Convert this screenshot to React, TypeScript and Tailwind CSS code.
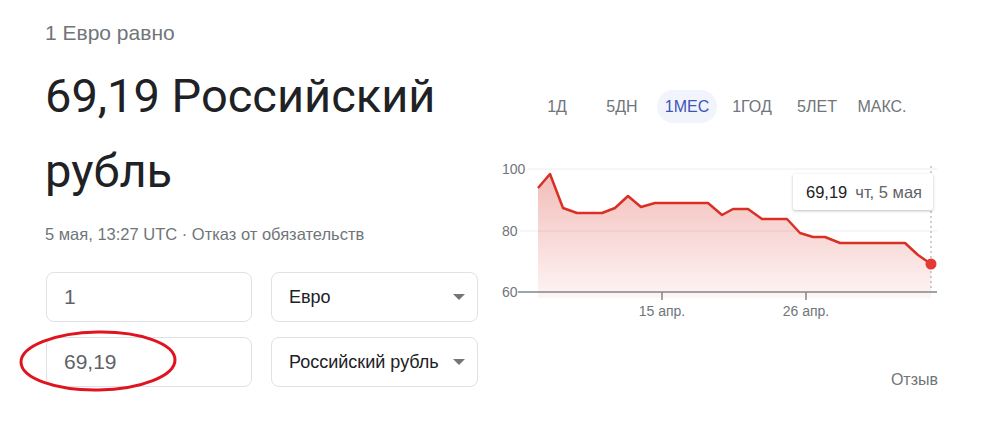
import React from "react";

const tabs = ["1Д", "5ДН", "1МЕС", "1ГОД", "5ЛЕТ", "МАКС."];

// точки графика (в координатах svg 440x160)
const points: [number, number][] = [
  [38, 28], [50, 14], [63, 48], [77, 53], [102, 53], [115, 48], [128, 36],
  [141, 47], [155, 43], [208, 43], [222, 55], [233, 49], [248, 49], [262, 59],
  [287, 59], [300, 73], [313, 77], [325, 77], [340, 83], [405, 83], [418, 95],
  [431, 104],
];

function Chart() {
  const line = points.map((p) => p.join(",")).join(" ");
  const area = `${line} 431,138 38,138`;
  return (
    <div className="relative w-[440px] h-[160px]">
      <svg width="440" height="160" viewBox="0 0 440 160" className="block">
        <defs>
          <linearGradient id="fill" x1="0" y1="0" x2="0" y2="1">
            <stop offset="0%" stopColor="#d93025" stopOpacity="0.32" />
            <stop offset="100%" stopColor="#d93025" stopOpacity="0.05" />
          </linearGradient>
        </defs>
        <line x1="28" y1="9" x2="437" y2="9" stroke="#ebedf0" strokeWidth="1" />
        <line x1="20" y1="71" x2="437" y2="71" stroke="#ebedf0" strokeWidth="1" />
        <polygon points={area} fill="url(#fill)" />
        <line x1="18" y1="132" x2="437" y2="132" stroke="#80868b" strokeWidth="1.5" />
        <line x1="162" y1="132" x2="162" y2="140" stroke="#80868b" strokeWidth="1.5" />
        <line x1="306" y1="132" x2="306" y2="140" stroke="#80868b" strokeWidth="1.5" />
        <line x1="431" y1="6" x2="431" y2="132" stroke="#9aa0a6" strokeWidth="1" strokeDasharray="2 3" />
        <polyline points={line} fill="none" stroke="#d93025" strokeWidth="2.5" strokeLinejoin="round" />
        <circle cx="431" cy="104" r="5.5" fill="#e53935" />
        <g fontFamily="'Liberation Sans', Arial, sans-serif" fontSize="14" fill="#70757a">
          <text x="2" y="14">100</text>
          <text x="2" y="76">80</text>
          <text x="2" y="137">60</text>
          <text x="162" y="156" textAnchor="middle">15 апр.</text>
          <text x="306" y="156" textAnchor="middle">26 апр.</text>
        </g>
      </svg>
      <div className="absolute left-[293px] top-[14px] w-[140px] h-[36px] bg-white rounded-[2px] shadow-[0_1px_3px_rgba(0,0,0,0.25)] flex items-center pl-[13px] text-[16.5px] whitespace-nowrap">
        <span className="text-[#202124]">69,19</span>
        <span className="ml-[8px] text-[#5f6368]">чт, 5 мая</span>
      </div>
    </div>
  );
}

function Caret() {
  return (
    <svg width="12" height="6" viewBox="0 0 12 6" className="ml-auto">
      <path d="M0 0 L12 0 L6 6 Z" fill="#757575" />
    </svg>
  );
}

export default function App() {
  return (
    <div className="relative w-[1000px] h-[437px] bg-white flex font-['Liberation_Sans',Arial,sans-serif] overflow-hidden">
      {/* Левая колонка */}
      <div className="w-[500px] pl-[45px] pt-[21px]">
        <p className="text-[21px] leading-[24px] text-[#70757a]">1 Евро равно</p>
        <h1 className="mt-[13px] font-['Roboto',Arial,sans-serif] text-[47px] leading-[75px] text-[#202124] w-[420px]">
          69,19 Российский рубль
        </h1>
        <p className="mt-[16px] text-[16.5px] leading-[20px] text-[#70757a]">
          5 мая, 13:27 UTC · Отказ от обязательств
        </p>

        <div className="mt-[28px] ml-[1px] flex flex-col gap-[15px]">
          <div className="flex gap-[19px]">
            <div className="w-[206px] h-[50px] border border-[#dfe1e5] rounded-[8px] flex items-center pl-[17px] text-[21px] text-[#5f6368]">
              1
            </div>
            <div className="w-[207px] h-[50px] border border-[#dfe1e5] rounded-[8px] flex items-center pl-[17px] pr-[12px] text-[18px] text-[#202124]">
              Евро
              <Caret />
            </div>
          </div>
          <div className="flex gap-[19px]">
            <div className="w-[206px] h-[50px] border border-[#dfe1e5] rounded-[8px] flex items-center pl-[17px] text-[21px] text-[#5f6368]">
              69,19
            </div>
            <div className="w-[207px] h-[50px] border border-[#dfe1e5] rounded-[8px] flex items-center pl-[17px] pr-[12px] text-[18px] text-[#202124]">
              Российский рубль
              <Caret />
            </div>
          </div>
        </div>
      </div>

      {/* Правая колонка */}
      <div className="w-[500px] pt-[90px] flex flex-col">
        <div className="ml-[27px] flex gap-[5px]">
          {tabs.map((t) => (
            <div
              key={t}
              className={
                t === "1МЕС"
                  ? "w-[60px] h-[33px] rounded-full bg-[#f1f4fb] flex items-center justify-center text-[16px] text-[#3c55b8]"
                  : "w-[60px] h-[33px] flex items-center justify-center text-[16px] text-[#70757a]"
              }
            >
              {t}
            </div>
          ))}
        </div>
        <div className="mt-[37px]">
          <Chart />
        </div>
        <p className="mt-[50px] w-[438px] text-right text-[16px] leading-[20px] text-[#70757a]">Отзыв</p>
      </div>

      {/* Красный овал-пометка */}
      <svg className="absolute left-[18px] top-[328px] pointer-events-none" width="164" height="66" viewBox="0 0 164 66">
        <ellipse cx="80" cy="33" rx="77" ry="29" fill="none" stroke="#e0141e" strokeWidth="3" transform="rotate(-1 80 33)" />
      </svg>
    </div>
  );
}
